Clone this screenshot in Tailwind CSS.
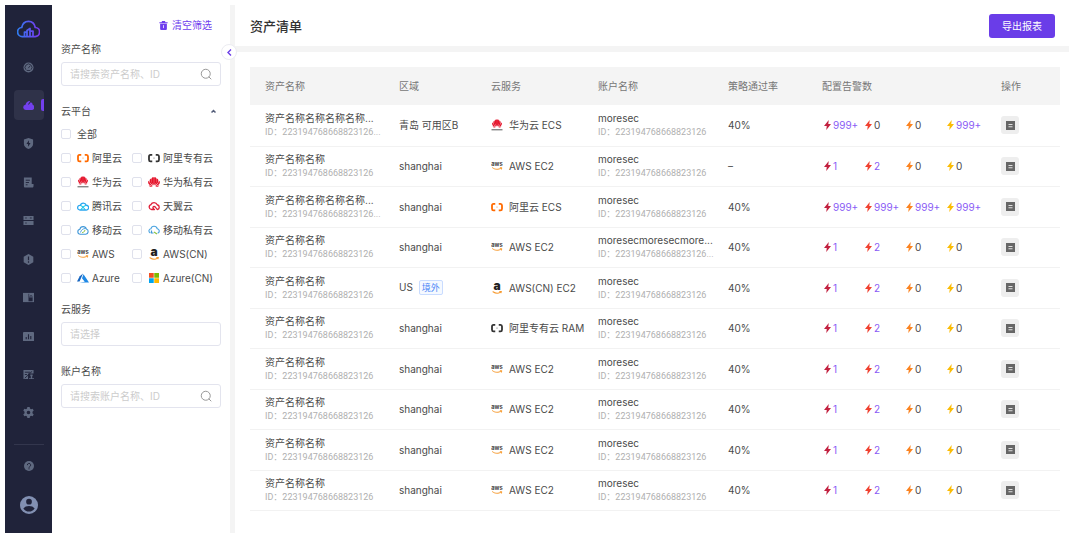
<!DOCTYPE html>
<html lang="zh-CN">
<head>
    <meta charset="UTF-8">
    <meta name="viewport" content="width=device-width, initial-scale=1.0">
    <title>资产清单</title>
    <script src="https://cdn.jsdelivr.net/npm/@tailwindcss/browser@4"></script>
</head>
<body class="bg-white min-h-screen flex pt-[5px] pl-[5px] pr-[11px] pb-[7px] font-['Inter','Noto_Sans_CJK_SC',sans-serif] text-[10px] leading-[14px] text-[#4a4a4a]">
    <!-- Icon sprite -->
    <svg class="hidden">
        <symbol id="i-ali" viewBox="0 0 24 24"><path fill="none" stroke="currentColor" stroke-width="3.600" d="M8.500 5.800H5Q2 5.800 2 9v6.500Q2 18.700 5 18.700H8.500M15.500 5.800H19Q22 5.800 22 9v6.500Q22 18.700 19 18.700H15.500"/><path stroke="currentColor" stroke-width="1.400" stroke-opacity=".5" d="M10 12.200h4"/></symbol>
        <symbol id="i-flower" viewBox="0 0 24 24"><g fill="#e5142b"><path d="M11.800 18.500C6.500 14 5 7 8 3.500c1-1 2.600-1.200 3.800-.7z"/><path d="M12.200 18.500C17.500 14 19 7 16 3.500c-1-1-2.600-1.200-3.800-.7z"/><path d="M10.800 19C4.500 16 2 11 3.500 7.500 4.200 6 5 5.300 6.300 5c.2 5.500 1.700 10 4.500 14z"/><path d="M13.200 19c6.300-3 8.800-8 7.300-11.500-.7-1.500-1.500-2.200-2.800-2.500-.2 5.500-1.700 10-4.500 14z"/><path d="M9.800 20C3.500 20-.5 16 .3 11.500c.2-.9.700-1.500 1.200-2 2 4.200 4.600 7.700 8.300 10.500z"/><path d="M14.200 20c6.300 0 10.300-4 9.500-8.500-.2-.9-.7-1.500-1.200-2-2 4.200-4.600 7.700-8.300 10.500z"/><path d="M9.500 20.500C6.500 22.500 3 22 1.500 18.500c2.500 1.300 5 1.900 8 2zM14.500 20.500c3 2 6.500 1.500 8-2-2.500 1.300-5 1.900-8 2z"/></g></symbol>
        <symbol id="i-huawei" viewBox="0 0 24 24"><use href="#i-flower" x="2" y="-1" width="20" height="20"/><path stroke="#777" stroke-width="2.500" d="M1 21.500h22"/></symbol>
        <symbol id="i-tencent" viewBox="0 0 24 24"><path fill="none" stroke="#2ba7f0" stroke-width="2.600" stroke-linejoin="round" d="M6.500 20a4.700 4.700 0 1 1 .3-9.300 6 6 0 0 1 11.600-.2A4.800 4.800 0 1 1 17.500 20z"/><path fill="none" stroke="#17c4e8" stroke-width="2.200" d="M6.500 11c3 0 8 6 10 8.500M18 11c-3 0-6 3-10.500 8.500"/></symbol>
        <symbol id="i-tianyi" viewBox="0 0 24 24"><path fill="none" stroke="#e0203a" stroke-width="2.600" stroke-linecap="round" d="M13 19H7a5 5 0 0 1-1-9.800C8 4 16 3.500 18.500 9.500 24 11 23.500 18 19 19c-3-.5-3-6-6.500-6-3 0-3.500 3-1.500 4"/></symbol>
        <symbol id="i-mobile" viewBox="0 0 24 24"><path fill="none" stroke="#3f97d8" stroke-width="2.200" stroke-linejoin="round" d="M6.500 20.500a5 5 0 0 1-.8-9.900 6.700 6.700 0 0 1 13-.4A5.300 5.300 0 0 1 17.500 20.500z"/><path fill="none" stroke="#3f97d8" stroke-width="1.800" d="M7 17c1-5 5-8 10-8"/><path fill="none" stroke="#8ac341" stroke-width="2" d="M10 17c2 .5 5-1 6-5"/></symbol>
        <symbol id="i-mobile-private" viewBox="0 0 24 24"><path fill="none" stroke="#4aa3e0" stroke-width="2.200" stroke-linecap="round" d="M4 17.500c-4-3-1.500-8 2-8 1-6 10.500-7 12.500 0C23 10 24 16 20 18"/><path fill="none" stroke="#3f97d8" stroke-width="2.400" d="M7 13v5h4"/><path stroke="#8ac341" stroke-width="2.400" d="M12 16l6 4"/></symbol>
        <symbol id="i-aws" viewBox="0 0 24 24"><text x="12" y="12.500" text-anchor="middle" font-family="Inter" font-weight="700" font-size="11.500" fill="#444">aws</text><path fill="none" stroke="#f79a2e" stroke-width="2" stroke-linecap="round" d="M3 15.500c5 4 12 4.200 17 .8M18.500 15.500h3l-.6 2.800"/></symbol>
        <symbol id="i-amazon" viewBox="0 0 24 24"><text x="12" y="16" text-anchor="middle" font-family="Inter" font-weight="900" font-size="24" fill="#222">a</text><path fill="none" stroke="#f79a2e" stroke-width="2.200" stroke-linecap="round" d="M4 19.500c5 3.500 11 3.500 15 .8M17.500 19h3l-.6 2.600"/></symbol>
        <symbol id="i-azure" viewBox="0 0 24 24"><path fill="#1565c0" d="M12 3L5.500 8.500 0 19h5z"/><path fill="#1e88e5" d="M13 4.500l-3 8 5.500 6.800L5 21h19z"/></symbol>
        <symbol id="i-windows" viewBox="0 0 24 24"><path fill="#f25022" d="M2 2h9.500v9.500H2z"/><path fill="#7fba00" d="M12.500 2H22v9.500h-9.500z"/><path fill="#00a4ef" d="M2 12.500h9.500V22H2z"/><path fill="#ffb900" d="M12.500 12.500H22V22h-9.500z"/></symbol>
        <symbol id="i-bolt" viewBox="0 0 14 20"><path fill="currentColor" d="M9.500 0L0 12h5.500L4.500 20 14 8H8.500z"/></symbol>
        <symbol id="i-search" viewBox="0 0 24 24"><circle cx="11.500" cy="11.500" r="9" fill="none" stroke="currentColor" stroke-width="2"/><path stroke="currentColor" stroke-width="2" stroke-linecap="round" d="M18 18l4 4"/></symbol>
        <symbol id="i-detail" viewBox="0 0 18 18"><path fill="#666" d="M0 0h18v18H0z"/><path stroke="#eee" stroke-width="1.800" d="M5 7h8M5 11.500h8"/></symbol>
    </svg>

    <!-- Main navigation -->
    <nav class="w-[47px] shrink-0 bg-[#20233a] flex flex-col items-center text-[#5f6980]">
        <a href="#" aria-label="首页" class="h-[47px] flex items-center">
            <svg class="w-[23px] h-[18px]" viewBox="0 0 46 36" fill="none" stroke-width="3.500" stroke-linejoin="round">
                <defs><linearGradient id="logo" x1="0" x2="1"><stop offset="0" stop-color="#2f7cf0"/><stop offset="1" stop-color="#7a35ee"/></linearGradient></defs>
                <path stroke="url(#logo)" d="M14 33h-3a9 9 0 0 1-1.500-18C11 6 17 2.500 23 2.500S35 6 36.500 15A9 9 0 0 1 36 33H15v-9h5v9V21l6-4v16V22h6v11"/>
            </svg>
        </a>
        <div class="flex-1 flex flex-col justify-between">
            <a href="#" aria-label="概览" class="size-[30px] flex items-center justify-center">
                <svg class="size-[11px]" viewBox="0 0 24 24"><circle cx="12" cy="12" r="11" fill="currentColor"/><path fill="none" stroke="#20233a" stroke-width="1.800" d="M6.500 17a7.500 7.500 0 1 1 11 0M11.500 13.500l4-5M8 18.500h8"/></svg>
            </a>
            <a href="#" aria-label="资产" class="size-[30px] flex items-center justify-center rounded-sm bg-[#2f3249] text-[#7340ee] relative">
                <svg class="size-[11px]" viewBox="0 0 24 24"><path fill="currentColor" d="M6 22a6 6 0 0 1-.5-11.900C7 5 11 2 15.500 2.500L11 9.500l1.500 1L17 5c3 1 4 3 4 5.500A6 6 0 0 1 18 22z"/></svg>
                <span class="absolute right-0 top-[9px] w-[3px] h-3 rounded-l-xs bg-[#7340ee]"></span>
            </a>
            <a href="#" aria-label="防护" class="size-[30px] flex items-center justify-center">
                <svg class="size-[11px]" viewBox="0 0 24 24"><path fill="currentColor" d="M12 0l10 3v10c0 5-4.500 9-10 11C6.500 22 2 18 2 13V3z"/><path fill="#20233a" d="M13 5l-5.500 8H11v6l5.500-8H13z"/></svg>
            </a>
            <a href="#" aria-label="审计" class="size-[30px] flex items-center justify-center">
                <svg class="size-[11px]" viewBox="0 0 24 24"><path fill="currentColor" d="M2 1h17v14h4v4c0 3-1 4-3 4H5c-2 0-3-1-3-3z"/><path stroke="#20233a" stroke-width="2" fill="none" d="M6 7h9M6 12h7M6 17h4"/></svg>
            </a>
            <a href="#" aria-label="主机" class="size-[30px] flex items-center justify-center">
                <svg class="size-[11px]" viewBox="0 0 24 24"><path fill="currentColor" d="M1 2h22v9H1zM1 13h22v9H1z"/><path stroke="#20233a" stroke-width="2" d="M5 6.500h3M5 17.500h3M15 6.500h4"/></svg>
            </a>
            <a href="#" aria-label="风险" class="size-[30px] flex items-center justify-center">
                <svg class="size-[11px]" viewBox="0 0 24 24"><path fill="currentColor" d="M12 0l10.500 6v12L12 24 1.500 18V6z"/><path stroke="#20233a" stroke-width="2.600" d="M12 5.500v8M12 16v3"/></svg>
            </a>
            <a href="#" aria-label="基线" class="size-[30px] flex items-center justify-center">
                <svg class="size-[11px]" viewBox="0 0 24 24"><path fill="currentColor" d="M0 2h24v20H0z"/><path fill="#20233a" d="M13.500 12h7.500v8h-7.500zM12 4h1.500v16H12z"/><path fill="none" stroke="#20233a" stroke-width="1.500" d="M15.500 12V9.500a2 2 0 0 1 4 0V12"/></svg>
            </a>
            <a href="#" aria-label="报表" class="size-[30px] flex items-center justify-center">
                <svg class="size-[11px]" viewBox="0 0 24 24"><rect x="0" y="2" width="24" height="20" rx="1" fill="currentColor"/><path stroke="#20233a" stroke-width="2.400" d="M7 18v-5M12 18V7M17 18v-7"/></svg>
            </a>
            <a href="#" aria-label="合规" class="size-[30px] flex items-center justify-center">
                <svg class="size-[11px]" viewBox="0 0 24 24"><path fill="currentColor" d="M1 2h22v8H11v12H1zM13 20h11v2H13zM16 12h5v3l-1 1v4h-3v-4l-1-1z"/><path stroke="#20233a" stroke-width="2" d="M4 7h12M4 12h5M4 20l16-15"/></svg>
            </a>
            <a href="#" aria-label="设置" class="size-[30px] flex items-center justify-center">
                <svg class="size-[11px]" viewBox="0 0 24 24"><path fill="currentColor" fill-rule="evenodd" d="M9.500 0h5l.7 3.500 2.300 1.300 3.400-1.200 2.500 4.300-2.700 2.400v3.400l2.700 2.400-2.500 4.300-3.400-1.200-2.300 1.300-.7 3.500h-5l-.7-3.500-2.300-1.300-3.400 1.200L.6 16.100l2.700-2.400v-3.400L.6 7.900l2.500-4.300 3.400 1.200 2.300-1.300zM12 8a4 4 0 1 0 0 8 4 4 0 0 0 0-8z"/></svg>
            </a>
        </div>
        <div class="mt-4 pt-2 pb-[2px] border-t border-[#33364d] flex flex-col items-center">
            <a href="#" aria-label="帮助" class="w-[30px] h-[26px] flex items-center justify-center">
                <svg class="size-[10px]" viewBox="0 0 24 24"><circle cx="12" cy="12" r="12" fill="currentColor"/><path fill="none" stroke="#20233a" stroke-width="2.400" d="M8 10a4 4 0 1 1 5.500 3.500c-1 .5-1.500 1-1.500 2.500M12 17.500V20"/></svg>
            </a>
            <a href="#" aria-label="账户" class="w-[30px] h-[52px] flex items-center justify-center text-[#8290b2]">
                <svg class="size-[18px]" viewBox="0 0 24 24"><circle cx="12" cy="12" r="12" fill="currentColor"/><circle cx="12" cy="7.500" r="3.800" fill="#20233a"/><path fill="#20233a" d="M4.500 16.500c1.500-2.200 4.500-3.300 7.500-3.300s6 1.100 7.500 3.300c-1.500 2.700-4.300 4.300-7.500 4.300s-6-1.600-7.500-4.300z"/></svg>
            </a>
        </div>
    </nav>

    <!-- Filters -->
    <aside class="relative w-[183px] shrink-0 border-r-[5px] border-[#f4f4f4] px-[9px] pt-[13px]">
        <div class="flex justify-end pr-[9px]">
            <button type="button" class="flex items-center gap-1 text-[#6f3dee]">
                <svg class="size-[9px]" viewBox="0 0 24 24"><path fill="currentColor" d="M8 0h8l1 3h6v3H1V3h6zM3 7h18v14q0 3-3 3H6q-3 0-3-3z"/><path stroke="#fff" stroke-width="2" d="M12 11v8"/></svg>
                清空筛选
            </button>
        </div>
        <label for="asset" class="block mt-[10px]">资产名称</label>
        <div class="mt-[6px] h-6 flex items-center border border-[#e3e4ee] rounded-[3px] px-2 text-[#999]">
            <input id="asset" type="text" placeholder="请搜索资产名称、ID" class="flex-1 min-w-0 outline-none placeholder:text-[#ccc]">
            <svg class="size-3"><use href="#i-search"/></svg>
        </div>
        <button type="button" class="mt-[18px] w-full flex items-center justify-between pr-[5px]">
            云平台
            <svg class="w-[5px] h-[4px]" viewBox="0 0 10 8"><path fill="none" stroke="#555e7a" stroke-width="3" d="M1 7l4-4 4 4"/></svg>
        </button>
        <div id="platforms" class="mt-1 grid grid-cols-[71px_1fr] auto-rows-[24px] whitespace-nowrap">
            <label class="col-span-2 flex items-center gap-[6px]"><input type="checkbox" class="appearance-none size-[10px] border border-[#dfe1ec] rounded-[2px] checked:bg-[#6a3de8]">全部</label>
        </div>
        <label for="service" class="block mt-3">云服务</label>
        <select id="service" class="mt-[6px] h-6 w-full appearance-none border border-[#e3e4ee] rounded-[3px] px-2 text-[#ccc]">
            <option>请选择</option>
        </select>
        <label for="account" class="block mt-[18px]">账户名称</label>
        <div class="mt-[6px] h-6 flex items-center border border-[#e3e4ee] rounded-[3px] px-2 text-[#999]">
            <input id="account" type="text" placeholder="请搜索账户名称、ID" class="flex-1 min-w-0 outline-none placeholder:text-[#ccc]">
            <svg class="size-3"><use href="#i-search"/></svg>
        </div>
        <button type="button" aria-label="收起" class="absolute -right-[7px] top-[39px] size-4 rounded-full bg-white border border-[#ececf2] flex items-center justify-center">
            <svg class="w-[5px] h-[7px]" viewBox="0 0 10 14"><path fill="none" stroke="#6a3de8" stroke-width="2.800" d="M8 1L2 7l6 6"/></svg>
        </button>
    </aside>

    <main class="flex-1 min-w-0">
        <header class="flex items-center justify-between h-[47px] pl-[15px] pr-[14px] border-b-[6px] border-[#f4f4f4]">
            <h1 class="text-[13px] leading-[18px] font-medium text-[#333]">资产清单</h1>
            <button type="button" class="h-6 px-[13px] rounded-[3px] bg-[#6a3de8] text-white">导出报表</button>
        </header>
        <div class="pt-[15px] pl-[15px] pr-[9px]">
            <table class="w-full table-fixed text-left">
                <thead>
                    <tr class="h-[38px] bg-[#f4f4f4] text-[#777]">
                        <th class="w-[149px] pl-[15px] font-normal">资产名称</th>
                        <th class="w-[92px] font-normal">区域</th>
                        <th class="w-[107px] font-normal">云服务</th>
                        <th class="w-[130px] font-normal">账户名称</th>
                        <th class="w-[94px] font-normal">策略通过率</th>
                        <th class="w-[179px] font-normal">配置告警数</th>
                        <th class="w-[59px] font-normal">操作</th>
                    </tr>
                </thead>
                <tbody id="assets"></tbody>
            </table>
        </div>
    </main>

    <script>
        var platforms = [
            ['ali', '阿里云', 'text-[#ff6a00]'], ['ali', '阿里专有云', 'text-[#333]'],
            ['huawei', '华为云', ''], ['flower', '华为私有云', ''],
            ['tencent', '腾讯云', ''], ['tianyi', '天翼云', ''],
            ['mobile', '移动云', ''], ['mobile-private', '移动私有云', ''],
            ['aws', 'AWS', ''], ['amazon', 'AWS(CN)', ''],
            ['azure', 'Azure', ''], ['windows', 'Azure(CN)', '']
        ];
        document.getElementById('platforms').innerHTML += platforms.map(function(p) {
            return `<label class="flex items-center">
                <input type="checkbox" class="appearance-none size-[10px] mr-[6px] border border-[#dfe1ec] rounded-[2px] checked:bg-[#6a3de8]">
                <svg class="size-3 mr-[3px] ${p[2]}"><use href="#i-${p[0]}"/></svg>${p[1]}
            </label>`;
        }).join('');

        var id = '223194768668823126';
        var aws = ['aws', 'AWS EC2', ''];
        // name, asset id, region, service, account, account id, pass rate, alert counts
        // long names and ids come already shortened
        var assets = [
            ['资产名称名称名称名称...', id + '...', '青岛 可用区B', ['huawei', '华为云 ECS', ''], 'moresec', id, '40%', ['999+', 0, 0, '999+']],
            ['资产名称名称', id, 'shanghai', aws, 'moresec', id, '–', [1, 2, 0, 0]],
            ['资产名称名称名称名称...', id + '...', 'shanghai', ['ali', '阿里云 ECS', 'text-[#ff6a00]'], 'moresec', id, '40%', ['999+', '999+', '999+', '999+']],
            ['资产名称名称', id, 'shanghai', aws, 'moresecmoresecmore...', id + '...', '40%', [1, 2, 0, 0]],
            ['资产名称名称', id, 'US', ['amazon', 'AWS(CN) EC2', ''], 'moresec', id, '40%', [1, 2, 0, 0]],
            ['资产名称名称', id, 'shanghai', ['ali', '阿里专有云 RAM', 'text-[#333]'], 'moresec', id, '40%', [1, 2, 0, 0]]
        ];
        while (assets.length < 10) {
            assets.push(['资产名称名称', id, 'shanghai', aws, 'moresec', id, '40%', [1, 2, 0, 0]]);
        }
        var levels = ['text-[#c2203f]', 'text-[#f0402f]', 'text-[#fb8320]', 'text-[#fbbc05]'];

        function nameCell(name, id) {
            return `<div class="whitespace-nowrap">${name}</div>
                <div class="whitespace-nowrap text-[9px] font-['Roboto','Noto_Sans_CJK_SC',sans-serif] text-[#b0b0b0]">ID：${id}</div>`;
        }

        function alertCount(n, i) {
            return `<span class="w-[41px] flex items-center gap-[2px]">
                <svg class="w-[7px] h-[10px] ${levels[i]}"><use href="#i-bolt"/></svg>
                ${n ? `<a href="#" class="text-[#8a5cf5]">${n}</a>` : n}
            </span>`;
        }

        document.getElementById('assets').innerHTML = assets.map(function(a) {
            return `<tr class="odd:h-[41px] even:h-[40px] border-b border-[#f2f2f2]">
                <td class="pl-[15px]">${nameCell(a[0], a[1])}</td>
                <td>${a[2]}${a[2] == 'US' ? '<span class="ml-[6px] px-[2px] py-px border border-[#c9dcff] rounded-[2px] bg-[#f5f9ff] text-[9px] text-[#4a86f7]">境外</span>' : ''}</td>
                <td><div class="flex items-center gap-[6px] whitespace-nowrap"><svg class="size-3 ${a[3][2]}"><use href="#i-${a[3][0]}"/></svg>${a[3][1]}</div></td>
                <td>${nameCell(a[4], a[5])}</td>
                <td>${a[6]}</td>
                <td><div class="flex pl-[2px]">${a[7].map(alertCount).join('')}</div></td>
                <td><button type="button" aria-label="详情" class="size-[18px] rounded-[3px] bg-[#eee] flex items-center justify-center"><svg class="size-[9px]"><use href="#i-detail"/></svg></button></td>
            </tr>`;
        }).join('');
    </script>
</body>
</html>
